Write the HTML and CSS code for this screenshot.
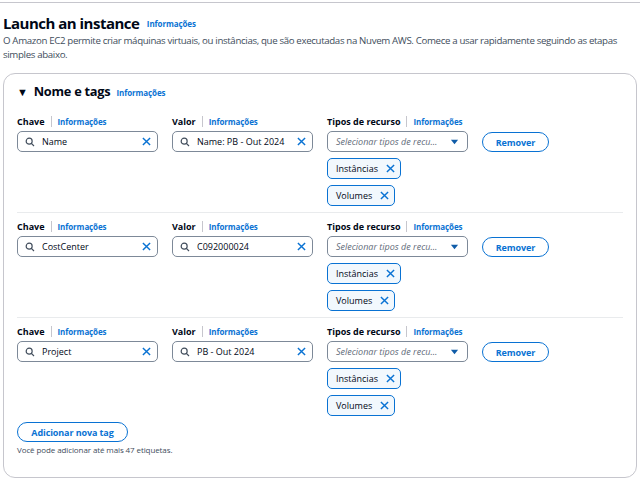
FILE: index.html
```html
<!DOCTYPE html>
<html lang="pt">
<head>
<meta charset="utf-8">
<link rel="stylesheet" href="styles.css">
</head>
<body>
<div class="topline"></div>
<header class="page-head">
  <h1 class="title">Launch an instance <a class="info info-title">Informações</a></h1>
  <p class="desc">O Amazon EC2 permite criar máquinas virtuais, ou instâncias, que são executadas na Nuvem AWS. Comece a usar rapidamente seguindo as etapas simples abaixo.</p>
</header>
<section class="card">
  <h2 class="card-head"><span class="caret">&#9660;</span>Nome e tags <a class="info info-head">Informações</a></h2>

  <div class="row">
    <div class="field">
      <div class="label"><b>Chave</b><span class="sep"></span><a class="info">Informações</a></div>
      <div class="input"><svg class="search" viewBox="0 0 12 12"><circle cx="5" cy="5" r="3.6"/><path d="M7.6 7.6 10.8 10.8"/></svg><span class="val">Name</span><svg class="x" viewBox="0 0 10 10"><path d="M1 1 9 9M9 1 1 9"/></svg></div>
    </div>
    <div class="field">
      <div class="label"><b>Valor</b><span class="sep"></span><a class="info">Informações</a></div>
      <div class="input"><svg class="search" viewBox="0 0 12 12"><circle cx="5" cy="5" r="3.6"/><path d="M7.6 7.6 10.8 10.8"/></svg><span class="val">Name: PB - Out 2024</span><svg class="x" viewBox="0 0 10 10"><path d="M1 1 9 9M9 1 1 9"/></svg></div>
    </div>
    <div class="field">
      <div class="label"><b>Tipos de recurso</b><span class="sep"></span><a class="info">Informações</a></div>
      <div class="select"><span class="ph">Selecionar tipos de recu...</span><svg class="dd" viewBox="0 0 10 8"><path d="M1 1.5h8L5 6.5z"/></svg></div>
      <div class="token">Instâncias<svg class="x" viewBox="0 0 10 10"><path d="M1 1 9 9M9 1 1 9"/></svg></div>
      <div class="token">Volumes<svg class="x" viewBox="0 0 10 10"><path d="M1 1 9 9M9 1 1 9"/></svg></div>
    </div>
    <button class="btn btn-remove">Remover</button>
  </div>

  <div class="row">
    <div class="field">
      <div class="label"><b>Chave</b><span class="sep"></span><a class="info">Informações</a></div>
      <div class="input"><svg class="search" viewBox="0 0 12 12"><circle cx="5" cy="5" r="3.6"/><path d="M7.6 7.6 10.8 10.8"/></svg><span class="val">CostCenter</span><svg class="x" viewBox="0 0 10 10"><path d="M1 1 9 9M9 1 1 9"/></svg></div>
    </div>
    <div class="field">
      <div class="label"><b>Valor</b><span class="sep"></span><a class="info">Informações</a></div>
      <div class="input"><svg class="search" viewBox="0 0 12 12"><circle cx="5" cy="5" r="3.6"/><path d="M7.6 7.6 10.8 10.8"/></svg><span class="val">C092000024</span><svg class="x" viewBox="0 0 10 10"><path d="M1 1 9 9M9 1 1 9"/></svg></div>
    </div>
    <div class="field">
      <div class="label"><b>Tipos de recurso</b><span class="sep"></span><a class="info">Informações</a></div>
      <div class="select"><span class="ph">Selecionar tipos de recu...</span><svg class="dd" viewBox="0 0 10 8"><path d="M1 1.5h8L5 6.5z"/></svg></div>
      <div class="token">Instâncias<svg class="x" viewBox="0 0 10 10"><path d="M1 1 9 9M9 1 1 9"/></svg></div>
      <div class="token">Volumes<svg class="x" viewBox="0 0 10 10"><path d="M1 1 9 9M9 1 1 9"/></svg></div>
    </div>
    <button class="btn btn-remove">Remover</button>
  </div>

  <div class="row last">
    <div class="field">
      <div class="label"><b>Chave</b><span class="sep"></span><a class="info">Informações</a></div>
      <div class="input"><svg class="search" viewBox="0 0 12 12"><circle cx="5" cy="5" r="3.6"/><path d="M7.6 7.6 10.8 10.8"/></svg><span class="val">Project</span><svg class="x" viewBox="0 0 10 10"><path d="M1 1 9 9M9 1 1 9"/></svg></div>
    </div>
    <div class="field">
      <div class="label"><b>Valor</b><span class="sep"></span><a class="info">Informações</a></div>
      <div class="input"><svg class="search" viewBox="0 0 12 12"><circle cx="5" cy="5" r="3.6"/><path d="M7.6 7.6 10.8 10.8"/></svg><span class="val">PB - Out 2024</span><svg class="x" viewBox="0 0 10 10"><path d="M1 1 9 9M9 1 1 9"/></svg></div>
    </div>
    <div class="field">
      <div class="label"><b>Tipos de recurso</b><span class="sep"></span><a class="info">Informações</a></div>
      <div class="select"><span class="ph">Selecionar tipos de recu...</span><svg class="dd" viewBox="0 0 10 8"><path d="M1 1.5h8L5 6.5z"/></svg></div>
      <div class="token">Instâncias<svg class="x" viewBox="0 0 10 10"><path d="M1 1 9 9M9 1 1 9"/></svg></div>
      <div class="token">Volumes<svg class="x" viewBox="0 0 10 10"><path d="M1 1 9 9M9 1 1 9"/></svg></div>
    </div>
    <button class="btn btn-remove">Remover</button>
  </div>

  <button class="btn btn-add">Adicionar nova tag</button>
  <p class="hint">Você pode adicionar até mais 47 etiquetas.</p>
</section>
</body>
</html>
```

FILE: styles.css
```css
* { box-sizing: border-box; }
html, body { margin: 0; padding: 0; background: #fff; }
body {
  font-family: "Open Sans", "Noto Sans", sans-serif;
  color: #000716;
  padding: 2px 3px 0;
}
.topline { border-top: 1px solid #c6c6cd; margin: 0 -3px; }
.page-head { padding-top: 10px; }
.title {
  margin: 0;
  font-size: 15px;
  line-height: 20px;
  font-weight: 700;
  letter-spacing: -0.5px;
}
.info {
  color: #0972d3;
  font-weight: 700;
  font-size: 8px;
  letter-spacing: -0.1px;
}
.info-title { margin-left: 4px; vertical-align: 2px; }
.desc {
  margin: 0;
  font-size: 9.7px;
  line-height: 14px;
  color: #414d5c;
  letter-spacing: -0.35px;
}
.card {
  margin-top: 11px;
  border: 1px solid #c6c6cd;
  border-radius: 12px;
  padding: 9px 13px 20px;
  height: 405px;
}
.card-head {
  margin: 0;
  font-size: 12.8px;
  line-height: 16px;
  font-weight: 700;
  display: flex;
  align-items: baseline;
  letter-spacing: -0.25px;
}
.caret { font-size: 11px; margin: 0 6px 0 0; }
.info-head { margin-left: 6px; }
.row {
  display: flex;
  gap: 14px;
  align-items: flex-start;
  padding: 7px 0 6px;
  border-bottom: 1px solid #e9ebed;
}
.card-head + .row { padding-top: 14px; }
.row.last { border-bottom: 0; padding-bottom: 6px; }
.field { width: 141px; display: flex; flex-direction: column; align-items: flex-start; }
.label {
  display: flex;
  align-items: center;
  height: 12px;
  font-size: 9px;
  margin-bottom: 4px;
}
.label b { font-weight: 700; }
.sep { width: 1px; height: 11px; background: #c6c6cd; margin: 0 6px; }
.input, .select {
  width: 141px;
  height: 21px;
  border: 1px solid #7d8998;
  border-radius: 5px;
  display: flex;
  align-items: center;
  font-size: 9px;
}
.input { padding: 0 6px 0 7px; }
.search { width: 10px; height: 10px; fill: none; stroke: #414d5c; stroke-width: 1.4; margin-right: 7px; flex: none; }
.val { flex: 1; white-space: nowrap; }
.x { width: 9px; height: 9px; fill: none; stroke: #0972d3; stroke-width: 1.6; flex: none; }
.select { padding: 0 8px 0 8px; justify-content: space-between; }
.ph { font-style: italic; color: #5f6b7a; white-space: nowrap; }
.dd { width: 9px; height: 8px; fill: #0f5ca8; }
.token {
  margin-top: 6px;
  height: 21px;
  border: 1px solid #0972d3;
  background: #f2f8fd;
  border-radius: 5px;
  display: flex;
  align-items: center;
  gap: 8px;
  padding: 0 5px 0 8px;
  font-size: 9px;
}
.btn {
  font-family: inherit;
  font-weight: 700;
  font-size: 9px;
  color: #0972d3;
  background: #fff;
  border: 1.5px solid #0972d3;
  border-radius: 20px;
  height: 20px;
  padding: 0;
  letter-spacing: -0.1px;
}
.btn-remove { width: 67px; margin-top: 17px; }
.btn-add { width: 111px; display: block; }
.hint { margin: 3px 0 0; font-size: 8px; line-height: 10px; color: #414d5c; letter-spacing: -0.1px; }
```
